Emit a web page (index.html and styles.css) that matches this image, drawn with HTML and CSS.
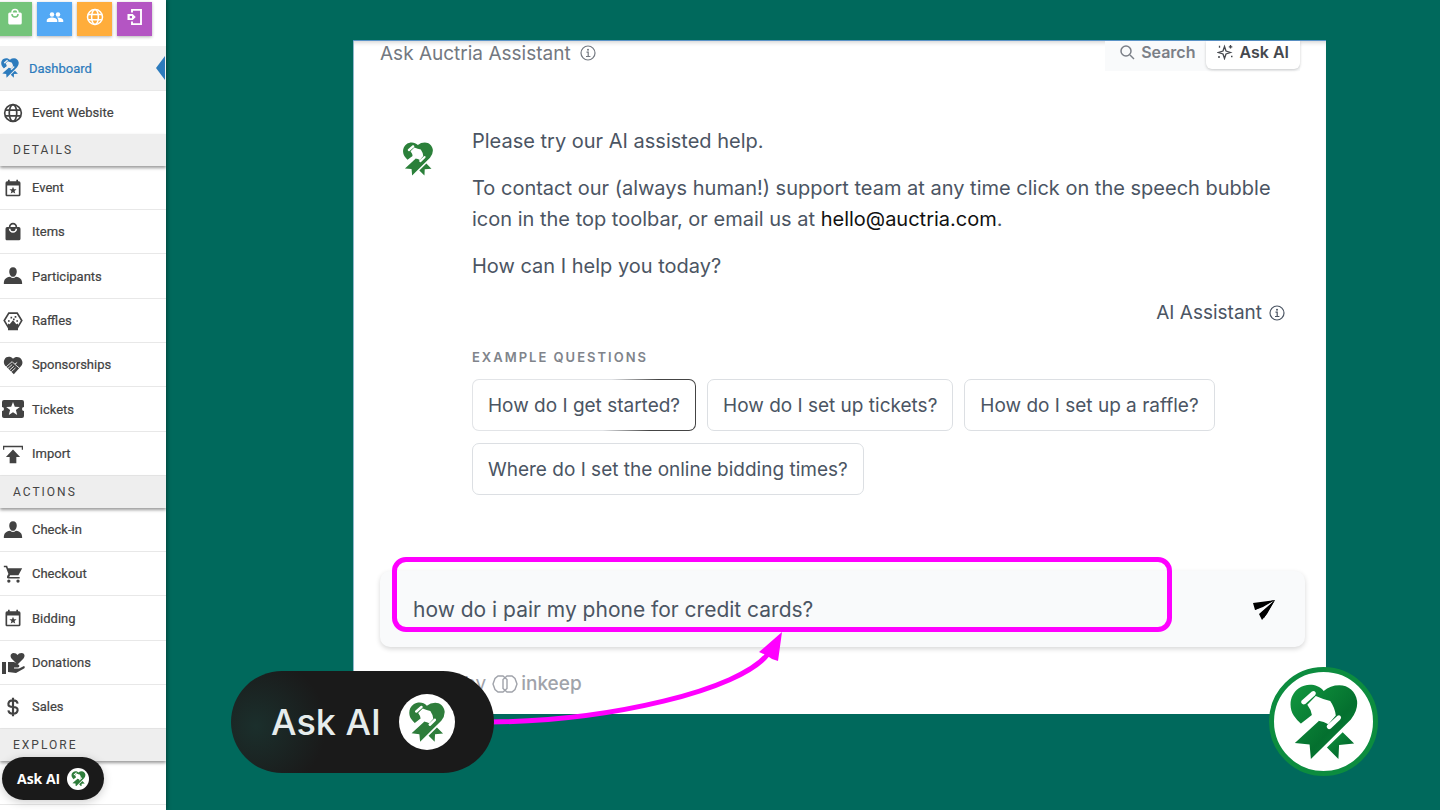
FILE: index.html
```html
<!DOCTYPE html>
<html lang="en">
<head>
  <meta charset="UTF-8">
  <meta name="viewport" content="width=device-width, initial-scale=1.0">
  <link rel="stylesheet" href="styles.css">
  <title>Ask Auctria Assistant</title>
</head>
<body>
  <!-- shared icons -->
  <svg class="defs" width="0" height="0" aria-hidden="true">
    <defs>
      <linearGradient id="leaf" x1="0" y1="0" x2="1" y2="1">
        <stop offset="0" stop-color="#12983f"/>
        <stop offset="0.6" stop-color="#04702f"/>
        <stop offset="1" stop-color="#0a8a3a"/>
      </linearGradient>
      <symbol id="logo" viewBox="118 84 206 232">
        <path class="logo-leaf" d="M220 105C200 82 166 82 144 97C116 116 112 155 129 181Q139 196 153 208L181 184L206 196L132 264L177 269L181 313L303 192Q325 165 322 136C318 107 295 88 268 88Q240 88 220 105Z"/>
        <path class="logo-leaf" d="M230 278L278 231L313 266L267 270L265 313Z"/>
        <path class="logo-hole" d="M153 134L184 107Q193 103 196 111Q197 115 193 119L164 145Q156 149 152 142Q150 138 153 134Z"/>
        <path class="logo-hole" d="M170 147L196 121Q220 132 240 136Q254 156 257 180L234 207Q221 198 204 196L186 205L160 228L145 209L184 179Q182 162 170 147Z"/>
        <path class="logo-hole" d="M231 209L262 181Q270 177 273 185Q274 189 270 193L242 220Q234 225 230 217Q228 213 231 209Z"/>
      </symbol>
      <symbol id="globe" viewBox="0 0 24 24">
        <g fill="none" stroke="currentColor" stroke-width="2">
          <circle cx="12" cy="12" r="10"/>
          <ellipse cx="12" cy="12" rx="4.500" ry="10"/>
          <path d="M3 8.500h18M3 15.500h18"/>
        </g>
      </symbol>
      <symbol id="bag" viewBox="0 0 24 24">
        <path d="M19 6h-2a5 5 0 0 0-10 0H5a2 2 0 0 0-2 2v12c0 1.100.9 2 2 2h14a2 2 0 0 0 2-2V8a2 2 0 0 0-2-2zm-7-3a3 3 0 0 1 3 3H9a3 3 0 0 1 3-3zm0 10a5 5 0 0 1-5-5h2a3 3 0 0 0 6 0h2a5 5 0 0 1-5 5z"/>
      </symbol>
      <symbol id="calendar" viewBox="0 0 24 24">
        <path fill-rule="evenodd" d="M19 4h-1V2h-2v2H8V2H6v2H5a2 2 0 0 0-2 2v14c0 1.100.9 2 2 2h14a2 2 0 0 0 2-2V6a2 2 0 0 0-2-2zm0 16H5V9h14v11z"/>
        <path d="M12 10.500l1.200 2.900 3.100.2-2.400 2 .8 3-2.700-1.600-2.700 1.600.8-3-2.400-2 3.100-.2z"/>
      </symbol>
      <symbol id="person" viewBox="0 0 24 24">
        <path d="M12 1.500c3 0 4.500 2.200 4.500 5S15 13 12 13 7.500 9.300 7.500 6.500 9 1.500 12 1.500zM8.500 13Q12 16 15.500 13C21 14 23 16 23 21.500H1C1 16 3 14 8.500 13z"/>
      </symbol>
      <symbol id="drum" viewBox="0 0 24 24">
        <path d="M7 2.500h10l5.500 9-5.500 9H7l-5.500-9z" fill="none" stroke="currentColor" stroke-width="2"/>
        <path d="M12 11l4 5 2-1v8H6v-8l2 1z"/>
        <path d="M9 7h2v2H9zM14 6h2v2h-2zM6 11h2v2H6zM16 11h2v2h-2zM12 9h2v2h-2z"/>
      </symbol>
      <symbol id="handshake" viewBox="0 0 24 24">
        <path d="M12 4.500C9 1 4 1.500 2 5s-.5 6.500 1.500 8.500L13 23l8-9c3-3 3-6 1-9s-7-4-10-.5z"/>
        <path d="M4 14l7-6 3 3 3-2M6 16l5-4.500M8 18l5-4.500M10 20l5-4.500M14 11l6 5" fill="none" stroke="#fff" stroke-width="1"/>
      </symbol>
      <symbol id="ticket" viewBox="0 0 24 24">
        <path fill-rule="evenodd" d="M23 10V5a2 2 0 0 0-2-2H3a2 2 0 0 0-2 2v5a2 2 0 0 1 0 4v5c0 1.100.9 2 2 2h18a2 2 0 0 0 2-2v-5a2 2 0 0 1 0-4zM16.200 18L12 15.200 7.800 18l1.300-4.900L5.200 10l5-.3L12 5l1.800 4.700 5 .3-3.900 3.100z"/>
      </symbol>
      <symbol id="upload" viewBox="0 0 24 24">
        <path d="M0 2h24v5h-1.500V4h-21v3H0zM12 6.500l8.500 9h-4.500v7.500h-8v-7.500H3.500z"/>
      </symbol>
      <symbol id="cart" viewBox="0 0 24 24">
        <path d="M1 2h4l1 3h17l-4.500 8.500H8.500L7.500 15.500H20v2H6q-2-.5-1-3l1.500-2.500L3.500 4H1z"/>
        <circle cx="7" cy="20.500" r="2"/>
        <circle cx="18" cy="20.500" r="2"/>
      </symbol>
      <symbol id="donate" viewBox="0 0 24 24">
        <path d="M1 11h4v12H1zM7 11h6l5 3q1 2-1 2.500h-4v1h5l5-2.500q1.500 1 0 2.500L15 22l-8-1zM16.500 13.500L10.500 7.500C8.500 5 10 2 12.500 2q3 0 4 2Q17.500 2 20.500 2c3 0 4 3 2 5.500z"/>
      </symbol>
      <symbol id="dollar" viewBox="0 0 24 24">
        <path d="M12 1v22M17.500 8q-.5-4-5.500-4t-5.500 4 5.500 4 5.500 4-5.500 4-5.500-4" fill="none" stroke="currentColor" stroke-width="2.600"/>
      </symbol>
      <symbol id="info" viewBox="0 0 16 16">
        <g fill="none" stroke="currentColor" stroke-width="1.200">
          <circle cx="8" cy="8" r="7"/>
          <path d="M6.500 7.200H8.200V11.500M6 11.500h4.400"/>
        </g>
        <circle cx="8" cy="4.700" r="1"/>
      </symbol>
    </defs>
  </svg>

  <div class="app">
    <aside class="sidebar">
      <div class="tiles">
        <button class="tile green" aria-label="Items"><svg><use href="#bag"/></svg></button>
        <button class="tile blue" aria-label="Participants">
          <svg viewBox="0 0 24 24"><circle cx="8" cy="8.500" r="3"/><circle cx="16" cy="8.500" r="3"/><path d="M1 18.500v-2c0-2.500 4-4 7-4s7 1.500 7 4v2zM16.500 18.500v-2q0-2.300-2-3.900c3-.4 8.500 1.200 8.500 3.900v2z"/></svg>
        </button>
        <button class="tile orange" aria-label="Website"><svg><use href="#globe"/></svg></button>
        <button class="tile purple" aria-label="Sign in">
          <svg viewBox="0 0 24 24"><path class="line" d="M8 6V2.500h12v19H8V18" stroke-width="2.500"/><path d="M2 8h7l4 4-4 4H2zM5 10.500v3h3v-3z" fill-rule="evenodd"/></svg>
        </button>
      </div>

      <nav>
        <a class="item active" href="#"><svg><use href="#logo"/></svg>Dashboard</a>
        <a class="item website" href="#"><svg><use href="#globe"/></svg>Event Website</a>

        <h2>DETAILS</h2>
        <div class="group">
          <a class="item" href="#"><svg><use href="#calendar"/></svg>Event</a>
          <a class="item" href="#"><svg><use href="#bag"/></svg>Items</a>
          <a class="item" href="#"><svg><use href="#person"/></svg>Participants</a>
          <a class="item" href="#"><svg><use href="#drum"/></svg>Raffles</a>
          <a class="item" href="#"><svg><use href="#handshake"/></svg>Sponsorships</a>
          <a class="item" href="#"><svg class="wide"><use href="#ticket"/></svg>Tickets</a>
          <a class="item" href="#"><svg><use href="#upload"/></svg>Import</a>
        </div>

        <h2>ACTIONS</h2>
        <div class="group">
          <a class="item" href="#"><svg><use href="#person"/></svg>Check-in</a>
          <a class="item" href="#"><svg><use href="#cart"/></svg>Checkout</a>
          <a class="item" href="#"><svg><use href="#calendar"/></svg>Bidding</a>
          <a class="item" href="#"><svg class="wide"><use href="#donate"/></svg>Donations</a>
          <a class="item" href="#"><svg><use href="#dollar"/></svg>Sales</a>
        </div>

        <h2>EXPLORE</h2>
        <div class="item"></div>
      </nav>

      <button class="ask-small">Ask AI <span class="badge"><svg><use href="#logo"/></svg></span></button>
    </aside>

    <main>
      <section class="panel">
        <header>
          <h1>Ask Auctria Assistant <svg class="info"><use href="#info"/></svg></h1>
          <div class="tabs">
            <button class="tab">
              <svg class="line" viewBox="0 0 16 16" stroke-width="1.500"><circle cx="7" cy="7" r="5"/><path d="M11 11l4 4"/></svg>
              Search
            </button>
            <button class="tab selected">
              <svg class="line" viewBox="0 0 16 16" stroke-width="1.300"><path d="M7.500 2.500L9 7l4.500 1.500L9 10l-1.500 4.500L6 10 1.500 8.500 6 7z"/><path d="M13.500 1v3.500M11.800 2.800h3.500M2.500 1.800v2M1 13h2M14 12.500h1.500"/></svg>
              Ask AI
            </button>
          </div>
        </header>

        <div class="chat">
          <svg class="avatar"><use href="#logo"/></svg>
          <div class="message">
            <p>Please try our AI assisted help.</p>
            <p>To contact our (always human!) support team at any time click on the speech bubble icon in the top toolbar, or email us at <a href="mailto:hello@auctria.com">hello@auctria.com</a>.</p>
            <p>How can I help you today?</p>
            <div class="author">AI Assistant <svg class="info"><use href="#info"/></svg></div>
            <h3>EXAMPLE QUESTIONS</h3>
            <div class="questions">
              <button class="glow">How do I get started?</button>
              <button>How do I set up tickets?</button>
              <button>How do I set up a raffle?</button>
              <button>Where do I set the online bidding times?</button>
            </div>
          </div>
        </div>

        <form class="composer">
          <input type="text" aria-label="Your question" value="how do i pair my phone for credit cards?">
          <button type="button" aria-label="Send">
            <svg viewBox="0 0 24 24"><path d="M23 3L1 6l2 7 8-3zM23 3L7 17l3 6 5-6z"/><path d="M23 3L3 13l1-5zM23 3L12 21l-4-4z"/></svg>
          </button>
          <div class="highlight"></div>
        </form>

        <footer>
          Powered by
          <svg class="line" viewBox="0 0 26 18" stroke-width="1.400"><path d="M6 1h5l4 3.500v9L11 17H6l-3-2.500L1 9l2-5.500z"/><path d="M15 1h5l3 2.500L25 9l-2 5.500L20 17h-5l-4-3.500v-9z"/></svg>
          <span>inkeep</span>
        </footer>
      </section>

      <!-- arrow from the big button to the question box -->
      <svg class="arrow" viewBox="0 0 300 100">
        <path class="line" d="M0 92C120 91 250 60 278 24" stroke-width="5"/>
        <path d="M292 2L269 22L276 25L282 29L288 31Z"/>
      </svg>

      <button class="ask-big">Ask AI <span class="badge"><svg><use href="#logo"/></svg></span></button>
      <div class="brand"><svg><use href="#logo"/></svg></div>
    </main>
  </div>
</body>
</html>
```
FILE: styles.css
```css
* {
  box-sizing: border-box;
}

body {
  margin: 0;
  background: #00695c;
  font-family: Inter, "Liberation Sans", sans-serif;
  color: #4b5563;
}

button {
  font-family: inherit;
  border: none;
  cursor: pointer;
}

a {
  text-decoration: none;
}

svg {
  fill: currentColor;
  flex-shrink: 0;
}

.line {
  fill: none;
  stroke: currentColor;
}

.defs {
  position: absolute;
}

.logo-leaf {
  fill: var(--leaf, currentColor);
}

.logo-hole {
  fill: var(--hole, #fff);
}

.app {
  display: flex;
  min-height: 100vh;
}

/* sidebar */
.sidebar {
  width: 166px;
  flex-shrink: 0;
  padding-top: 2px;
  background: #fff;
  overflow: hidden;
  box-shadow: 1px 0 4px rgba(0, 0, 0, 0.4);
  font-family: Roboto, sans-serif;
}

.tiles {
  display: flex;
  gap: 5px;
  margin: 0 0 10px -3px;
}

.tile {
  width: 35px;
  height: 34px;
  padding: 0 0 4px;
  color: #fff;
  box-shadow: 0 1px 3px rgba(0, 0, 0, 0.3);
}

.tile svg {
  display: block;
  width: 18px;
  height: 18px;
  margin: auto;
}

.green { background: #74c47a; }
.blue { background: #53a9f5; }
.orange { background: #ffad3b; }
.purple { background: #b455c3; }

.item {
  display: flex;
  align-items: center;
  gap: 9px;
  height: 44px;
  padding-left: 3px;
  border-bottom: 1px solid #e8e8e8;
  font-size: 13px;
  color: #424242;
  -webkit-text-stroke: 0.2px;
}

.group .item:nth-child(3n) {
  height: 45px;
}

.item svg {
  width: 20px;
  height: 20px;
}

.item svg.wide {
  width: 24px;
  height: 24px;
  margin: 0 -2px;
}

.item.active {
  position: relative;
  height: 45px;
  padding-left: 0;
  background: #f1f1f1;
  color: #2c7bbd;
  --hole: #f1f1f1;
}

.item.website {
  height: 43px;
  border-bottom: none;
}

.item.active::after {
  content: "";
  position: absolute;
  right: 1px;
  top: 10px;
  border: 12px solid transparent;
  border-left: none;
  border-right: 9px solid #2c7bbd;
}

.sidebar h2 {
  position: relative;
  margin: 0;
  padding-left: 13px;
  background: #eee;
  box-shadow: 0 2px 3px rgba(0, 0, 0, 0.4);
  font-size: 12px;
  font-weight: 400;
  line-height: 32px;
  letter-spacing: 2px;
  color: #444;
}

.ask-small,
.ask-big {
  display: flex;
  align-items: center;
  background: #1a1a1a;
  color: #fff;
}

.ask-small {
  position: absolute;
  left: 2px;
  top: 757px;
  gap: 7px;
  height: 43px;
  padding: 0 15px;
  border-radius: 22px;
  box-shadow: 0 2px 10px rgba(0, 0, 0, 0.2);
  font: 700 14px "Open Sans", sans-serif;
}

.badge {
  display: flex;
  align-items: center;
  justify-content: center;
  width: 22px;
  height: 22px;
  border-radius: 50%;
  background: #fff;
  color: #2e7d3b;
}

.badge svg {
  width: 68%;
  height: 72%;
}

/* assistant panel */
main {
  position: relative;
  flex: 1;
  padding: 40px 114px 96px 187px;
}

.panel {
  padding: 0 21px 18px 27px;
  background: #fff;
  border-top: 1px solid #5b93c7;
  box-shadow: inset 1px 0 #8fb8cc, inset 0 4px 5px -3px #ccc;
}

header {
  display: flex;
  justify-content: space-between;
}

h1 {
  display: flex;
  align-items: center;
  gap: 9px;
  height: 24px;
  margin: 0;
  font-size: 19px;
  font-weight: 400;
  color: #737880;
}

.info {
  width: 16px;
  height: 16px;
}

.tabs {
  display: flex;
  margin-right: 5px;
  padding-bottom: 2px;
  background: #f9fafb;
}

.tab {
  display: flex;
  align-items: center;
  gap: 6px;
  padding: 0 11px 6px 14px;
  background: none;
  font-size: 16px;
  font-weight: 600;
  line-height: 22px;
  color: #7b7f87;
}

.tab svg {
  width: 16px;
  height: 16px;
}

.tab.selected {
  padding-left: 11px;
  border-radius: 0 0 6px 6px;
  background: #fff;
  box-shadow: 0 1px 3px rgba(0, 0, 0, 0.2);
  color: #45484e;
}

.chat {
  display: flex;
  margin-top: 55px;
  padding-right: 20px;
}

.avatar {
  width: 32px;
  height: 34px;
  margin: 16px 38px 0 22px;
  color: #2b803a;
}

.message {
  flex: 1;
  font-size: 20px;
  line-height: 31px;
}

.message p {
  margin: 0 0 16px;
}

.message a {
  color: #111;
}

.author {
  display: flex;
  align-items: center;
  justify-content: flex-end;
  gap: 7px;
  margin-top: 20px;
  font-size: 19px;
  line-height: 22px;
}

h3 {
  margin: 24px 0 13px;
  font-size: 13px;
  font-weight: 600;
  line-height: 18px;
  letter-spacing: 2px;
  color: #80848b;
}

.questions {
  display: flex;
  flex-wrap: wrap;
  gap: 12px 11px;
}

.questions button {
  height: 52px;
  padding: 0 15px;
  border: 1px solid #dcdfe3;
  border-radius: 7px;
  background: #fff;
  font-size: 19px;
  color: #4b5563;
}

.questions .glow {
  border-color: transparent;
  background: linear-gradient(#fff, #fff) padding-box, linear-gradient(100deg, #e2e4e7 60%, #444 80%) border-box;
}

.composer {
  position: relative;
  display: flex;
  align-items: center;
  height: 76px;
  margin-top: 76px;
  padding: 0 29px 0 33px;
  border-radius: 10px;
  background: #f9fafb;
  box-shadow: 0 2px 5px rgba(0, 0, 0, 0.16);
}

.composer input {
  flex: 1;
  padding: 0;
  border: none;
  outline: none;
  background: none;
  font: 21px Inter, sans-serif;
  color: #4b5563;
}

.composer button {
  padding: 0;
  background: none;
  color: #000;
}

.composer button svg {
  display: block;
  width: 24px;
  height: 24px;
}

.highlight {
  position: absolute;
  top: -14px;
  right: 133px;
  bottom: 15px;
  left: 12px;
  border: 5px solid #f0f;
  border-radius: 14px;
  pointer-events: none;
}

footer {
  display: flex;
  align-items: center;
  gap: 3px;
  margin-top: 25px;
  font-size: 19px;
  line-height: 24px;
  color: #a0a3aa;
}

footer svg {
  width: 26px;
  height: 18px;
  margin-left: 3px;
}

footer span {
  font-weight: 500;
}

/* call-outs lying over the page */
.arrow {
  position: absolute;
  left: 324px;
  top: 630px;
  width: 300px;
  height: 100px;
  color: #f0f;
}

.ask-big {
  position: absolute;
  left: 65px;
  top: 671px;
  gap: 18px;
  width: 263px;
  height: 102px;
  padding: 0 0 0 40px;
  border-radius: 51px;
  background: radial-gradient(circle at 25px 55px, #1b2f2c, #1a1a1a 70px);
  font-size: 36px;
  font-weight: 500;
  color: #e6ecec;
}

.ask-big .badge {
  width: 56px;
  height: 56px;
}

.brand {
  position: absolute;
  right: 62px;
  top: 667px;
  display: flex;
  align-items: center;
  justify-content: center;
  width: 109px;
  height: 109px;
  border: 5px solid #0c8c3f;
  border-radius: 50%;
  background: #fff;
  --leaf: url(#leaf);
}

.brand svg {
  width: 68px;
  height: 76px;
}
```
